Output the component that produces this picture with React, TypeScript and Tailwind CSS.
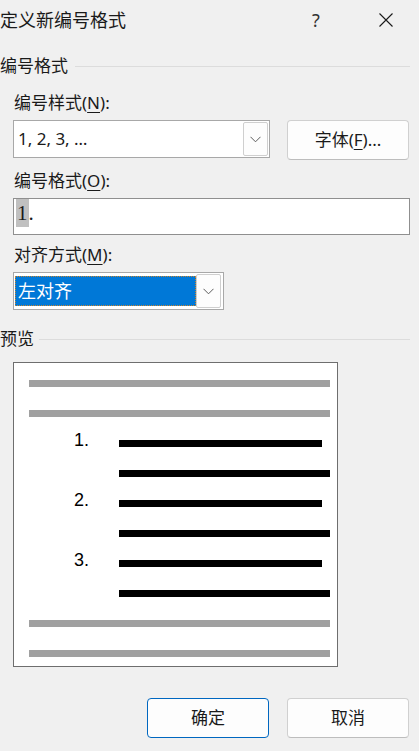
import { ReactNode } from "react";

// ----------------------------------------------------------------------

function Chevron() {
  return (
    <svg width="11" height="7" viewBox="0 0 11 7">
      <path d="M0.5 0.8 L5.5 5.8 L10.5 0.8" fill="none" stroke="#5c5c5c" strokeWidth="1" />
    </svg>
  );
}

function GroupHeader({ title, line }: { title: string; line: string }) {
  return (
    <div className="flex h-[20px] items-center">
      <span className="text-[17px] leading-[20px] text-[#1a1a1a]">{title}</span>
      <div className={`${line} mr-[9px] h-px flex-1 bg-[#dcdcdc]`} />
    </div>
  );
}

function FieldLabel({ text, hotkey }: { text: string; hotkey: string }) {
  return (
    <div className="ml-[14px] h-[20px] text-[17px] leading-[20px] text-[#1a1a1a]">
      {text}(<span className="underline underline-offset-[3px]">{hotkey}</span>):
    </div>
  );
}

function Button({ children, primary }: { children: ReactNode; primary?: boolean }) {
  return (
    <div
      className={`flex h-[40px] w-[122px] items-center justify-center rounded-[4px] border bg-[#fdfdfd] text-[17px] text-[#1a1a1a] ${
        primary ? "border-[#0067c0]" : "border-[#d0d0d0] border-b-[#bdbdbd]"
      }`}
    >
      {children}
    </div>
  );
}

function Bar({ grey, short }: { grey?: boolean; short?: boolean }) {
  return (
    <div
      className={`h-[7px] ${grey ? "bg-[#a0a0a0]" : "bg-black"} ${short ? "w-[203px]" : grey ? "w-[301px]" : "w-[211px]"}`}
    />
  );
}

function ListItem({ n }: { n: number }) {
  return (
    <>
      <div className="flex h-[7px] items-start">
        <div className="h-0 w-[90px] pl-[45px] font-['Liberation_Sans',sans-serif] text-[18px] leading-[0px] text-black">
          {n}.
        </div>
        <Bar short />
      </div>
      <div className="flex h-[7px]">
        <div className="w-[90px]" />
        <Bar />
      </div>
    </>
  );
}

export default function App() {
  return (
    <div className="relative h-[751px] w-[419px] overflow-hidden bg-[#f0f0f0] font-['Noto_Sans','Noto_Sans_CJK_SC',sans-serif] text-[#1a1a1a]">
      {/* Title bar */}
      <div className="flex h-[39px] items-center">
        <span className="text-[18px] leading-[22px]">定义新编号格式</span>
        <div className="ml-auto flex w-[46px] justify-center text-[18px] leading-[22px] text-[#333]">?</div>
        <div className="ml-[24px] mr-[10px] flex w-[46px] justify-center">
          <svg width="14" height="14" viewBox="0 0 14 14">
            <path d="M0.5 0.5 L13.5 13.5 M13.5 0.5 L0.5 13.5" stroke="#1a1a1a" strokeWidth="1.1" />
          </svg>
        </div>
      </div>

      <div className="mt-[17px]">
        <GroupHeader title="编号格式" line="ml-[7px]" />
      </div>

      <div className="mt-[17px]">
        <FieldLabel text="编号样式" hotkey="N" />
      </div>

      <div className="mt-[7px] ml-[13px] flex items-start gap-[17px]">
        <div className="flex h-[38px] w-[257px] items-center border border-[#a8a8a8] bg-white pl-[4px] pr-[1px]">
          <span className="flex-1 text-[17px] leading-[22px]">1, 2, 3, …</span>
          <div className="flex h-[34px] w-[25px] items-center justify-center rounded-[2px] border border-[#cfcfcf] bg-[#fdfdfd]">
            <Chevron />
          </div>
        </div>
        <Button>
          字体(<span className="underline underline-offset-[3px]">F</span>)...
        </Button>
      </div>

      <div className="mt-[11px]">
        <FieldLabel text="编号格式" hotkey="O" />
      </div>

      <div className="mt-[7px] ml-[13px] h-[37px] w-[397px] border border-[#8f8f8f] bg-white">
        <div className="ml-[2px] flex font-['Liberation_Serif',serif] text-[21px] leading-[28px] text-[#1a1a1a]">
          <span className="bg-[#c0c0c0] px-[1px]">1</span>
          <span>.</span>
        </div>
      </div>

      <div className="mt-[10px]">
        <FieldLabel text="对齐方式" hotkey="M" />
      </div>

      <div className="mt-[7px] ml-[13px] flex h-[38px] w-[211px] items-center border border-[#a8a8a8] bg-white pl-[1px] pr-[2px]">
        <div className="flex h-[30px] flex-1 items-center border border-dotted border-[#c9852f] bg-[#0078d7] pl-[2px] text-[18px] leading-[22px] text-white">
          左对齐
        </div>
        <div className="flex h-[34px] w-[25px] items-center justify-center rounded-[2px] border border-[#cfcfcf] bg-[#fdfdfd]">
          <Chevron />
        </div>
      </div>

      <div className="mt-[19px]">
        <GroupHeader title="预览" line="ml-[5px]" />
      </div>

      {/* Preview */}
      <div className="mt-[13px] ml-[13px] flex h-[305px] w-[325px] flex-col gap-[23px] border border-[#6e6e6e] bg-white pt-[17px] pl-[15px]">
        <Bar grey />
        <Bar grey />
        <ListItem n={1} />
        <ListItem n={2} />
        <ListItem n={3} />
        <Bar grey />
        <Bar grey />
      </div>

      <div className="mt-[31px] mr-[10px] flex justify-end gap-[18px]">
        <Button primary>确定</Button>
        <Button>取消</Button>
      </div>
    </div>
  );
}
